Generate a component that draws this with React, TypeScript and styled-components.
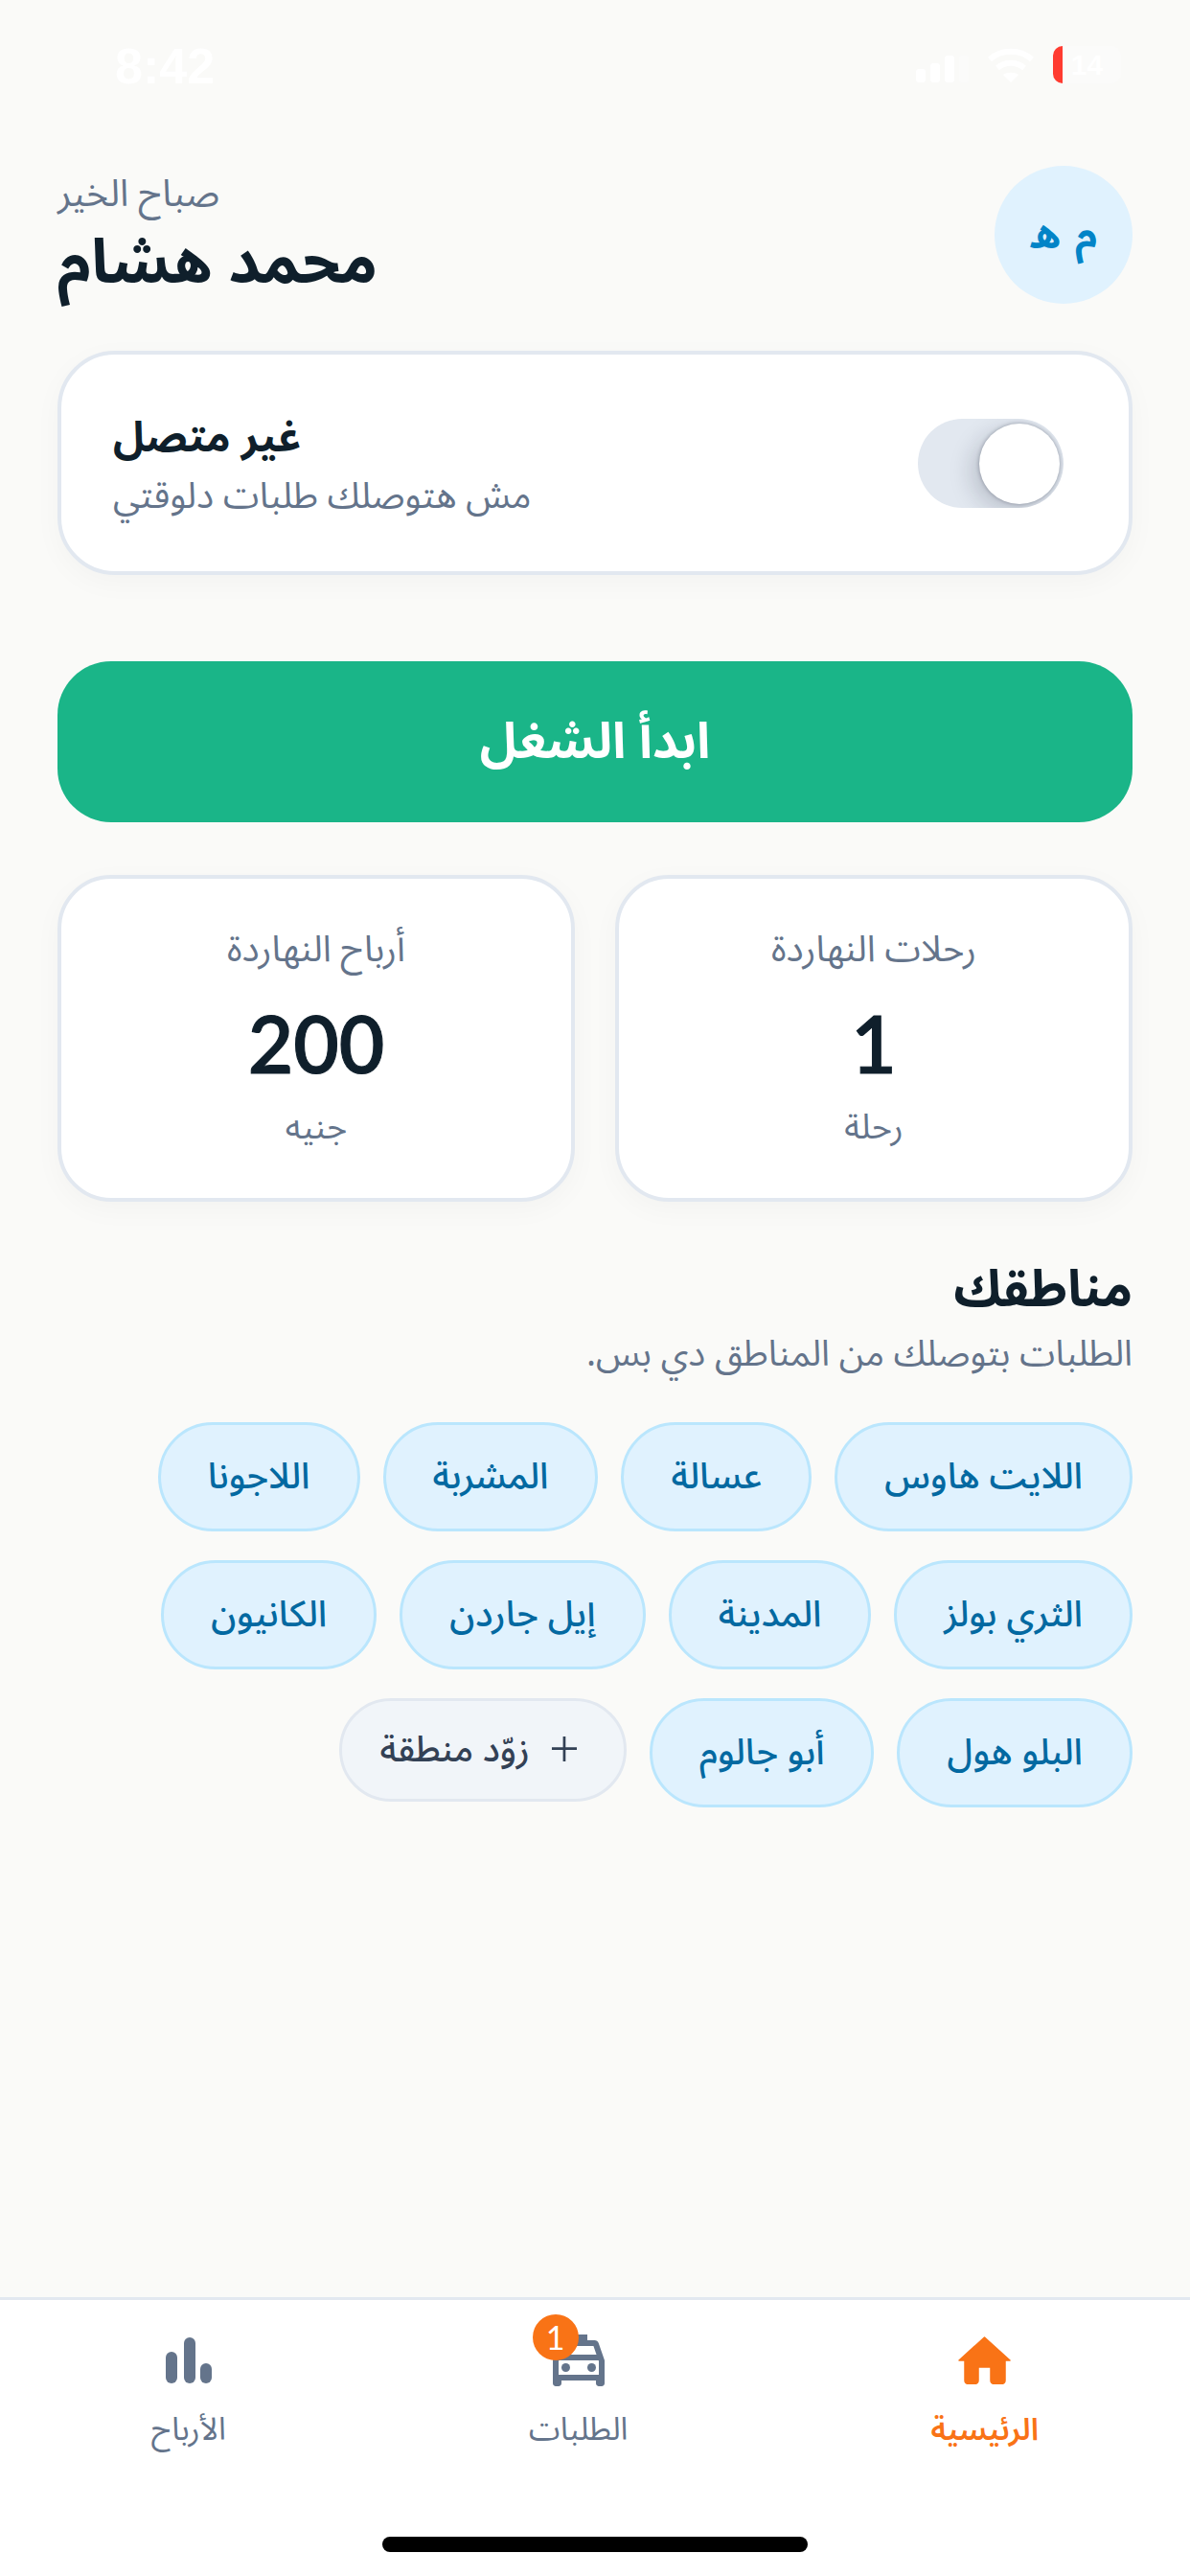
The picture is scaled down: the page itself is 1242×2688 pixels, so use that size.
import React from 'react';
import styled, { createGlobalStyle } from 'styled-components';
import { MdOutlineLocalTaxi } from 'react-icons/md';

const GlobalStyle = createGlobalStyle`
  html, body {
    margin: 0;
    padding: 0;
    background: #fafaf8;
  }
  * {
    box-sizing: border-box;
  }
  body {
    font-family: "Noto Sans Arabic", "Noto Sans", Inter, "DejaVu Sans", sans-serif;
  }
`;

const Screen = styled.div`
  width: 1242px;
  height: 2688px;
  display: flex;
  flex-direction: column;
  background: #fafaf8;
  overflow: hidden;
`;

const StatusBar = styled.div`
  height: 100px;
  flex-shrink: 0;
  padding: 44px 72px 0 120px;
  display: flex;
  justify-content: space-between;
  align-items: flex-start;
  direction: ltr;
`;

const Clock = styled.span`
  font-family: "Liberation Sans", sans-serif;
  font-size: 52px;
  line-height: 50px;
  font-weight: 700;
  color: #ffffff;
`;

const StatusIcons = styled.div`
  margin-top: 4px;
  display: flex;
  align-items: center;
  gap: 20px;
`;

const Battery = styled.div`
  position: relative;
  width: 71px;
  height: 39px;
  border-radius: 10px;
  background: #fbfbfa;
  overflow: hidden;
  text-align: center;
  font: 700 30px/39px "Liberation Sans", sans-serif;
  color: #ffffff;
`;

const BatteryLevel = styled.div`
  position: absolute;
  left: 0;
  top: 0;
  bottom: 0;
  width: 10px;
  background: #ff3b30;
`;

const Main = styled.main`
  flex: 1;
  padding: 73px 60px 0;
  display: flex;
  flex-direction: column;
`;

const Header = styled.header`
  height: 144px;
  display: flex;
  justify-content: space-between;
  align-items: center;
`;

const Avatar = styled.div`
  width: 144px;
  height: 144px;
  border-radius: 50%;
  background: #e0f2fe;
  color: #0284c7;
  display: flex;
  align-items: center;
  justify-content: center;
  font-size: 42px;
  font-weight: 700;
  word-spacing: 4px;
`;

const Greeting = styled.div`
  display: flex;
  flex-direction: column;
  gap: 6px;
  text-align: left;
`;

const Hello = styled.div`
  font-size: 39px;
  line-height: 54px;
  color: #64748b;
`;

const Name = styled.h1`
  margin: 0;
  font-size: 64px;
  line-height: 78px;
  font-weight: 700;
  color: #0f1f2b;
`;

const Card = styled.section`
  background: #ffffff;
  border: 4px solid #e2e8f0;
  box-shadow: 0 8px 30px rgba(15, 23, 42, 0.03);
`;

const StatusCard = styled(Card)`
  margin-top: 49px;
  height: 234px;
  border-radius: 60px;
  padding: 0 68px 0 54px;
  display: flex;
  align-items: center;
  justify-content: space-between;
`;

const StatusText = styled.div`
  padding-top: 6px;
  text-align: left;
`;

const StatusTitle = styled.div`
  font-size: 44px;
  line-height: 64px;
  font-weight: 700;
  color: #0f1f2b;
`;

const StatusHint = styled.div`
  font-size: 38px;
  line-height: 58px;
  color: #64748b;
`;

const Toggle = styled.div`
  direction: ltr;
  width: 152px;
  height: 93px;
  border-radius: 47px;
  background: #e2e8f0;
  position: relative;
  overflow: hidden;
`;

const ToggleKnob = styled.div`
  position: absolute;
  right: 4px;
  top: 5px;
  width: 84px;
  height: 84px;
  border-radius: 50%;
  background: #ffffff;
  box-shadow: -8px 8px 24px rgba(15, 23, 42, 0.18), 0 0 4px rgba(15, 23, 42, 0.35);
`;

const StartButton = styled.button`
  margin-top: 90px;
  height: 168px;
  border: none;
  border-radius: 56px;
  background: #1ab588;
  color: #ffffff;
  font-family: inherit;
  font-size: 52px;
  font-weight: 700;
`;

const Stats = styled.div`
  margin-top: 55px;
  display: grid;
  grid-template-columns: 1fr 1fr;
  gap: 42px;
`;

const StatCard = styled(Card)`
  height: 341px;
  border-radius: 56px;
  display: flex;
  flex-direction: column;
  align-items: center;
  padding-top: 48px;
`;

const StatLabel = styled.div`
  font-size: 38px;
  line-height: 52px;
  color: #64748b;
`;

const StatValue = styled.div`
  margin-top: 23px;
  font-family: Lato, "Liberation Sans", sans-serif;
  font-size: 82px;
  line-height: 96px;
  font-weight: 600;
  color: #0f1f2b;
  -webkit-text-stroke: 1px #0f1f2b;
`;

const StatUnit = styled.div`
  margin-top: 16px;
  font-size: 36px;
  line-height: 50px;
  color: #64748b;
`;

const SectionTitle = styled.h2`
  margin: 57px 0 0;
  font-size: 53px;
  line-height: 70px;
  font-weight: 700;
  color: #0f1f2b;
`;

const SectionHint = styled.p`
  margin: 4px 0 0;
  font-size: 37.6px;
  line-height: 56px;
  color: #64748b;
`;

const Chips = styled.div`
  margin-top: 43px;
  display: flex;
  flex-wrap: wrap;
  align-items: flex-start;
  gap: 30px 24px;
`;

const Chip = styled.div`
  height: 114px;
  padding: 0 49px;
  border-radius: 57px;
  background: #e0f2fe;
  border: 3px solid #bae6fd;
  color: #0369a1;
  font-size: 38px;
  font-weight: 500;
  display: flex;
  align-items: center;
`;

const AddChip = styled.button`
  height: 108px;
  padding: 0 46px 0 40px;
  border-radius: 54px;
  background: #f1f5f9;
  border: 3px solid #e2e8f0;
  color: #334155;
  font-family: inherit;
  font-size: 37px;
  font-weight: 500;
  display: flex;
  align-items: center;
  gap: 20px;
`;

const PlusSign = styled.span`
  font-size: 56px;
  line-height: 52px;
  font-weight: 300;
`;

const TabBar = styled.nav`
  position: relative;
  height: 291px;
  flex-shrink: 0;
  background: #ffffff;
  border-top: 3px solid #e2e8f0;
  padding-top: 27px;
  display: flex;
  justify-content: space-around;
  align-items: flex-start;
`;

const Tab = styled.div<{ $active?: boolean }>`
  position: relative;
  display: flex;
  flex-direction: column;
  align-items: center;
  gap: 12px;
  color: ${(p) => (p.$active ? '#f97316' : '#64748b')};
`;

const TabIcon = styled.div`
  position: relative;
  height: 72px;
  display: flex;
  align-items: center;
  justify-content: center;
`;

const TabLabel = styled.span<{ $active?: boolean }>`
  font-size: ${(p) => (p.$active ? 32 : 33)}px;
  line-height: 50px;
  font-weight: ${(p) => (p.$active ? 600 : 400)};
`;

const Badge = styled.span`
  position: absolute;
  top: -12px;
  left: -12px;
  width: 48px;
  height: 48px;
  border-radius: 50%;
  background: #f97316;
  color: #ffffff;
  font: 400 34px/48px Lato, sans-serif;
  text-align: center;
`;

const HomeIndicator = styled.div`
  position: absolute;
  bottom: 25px;
  left: 399px;
  width: 444px;
  height: 16px;
  border-radius: 8px;
  background: #000000;
`;

const regions = [
  'اللايت هاوس',
  'عسالة',
  'المشربة',
  'اللاجونا',
  'الثري بولز',
  'المدينة',
  'إيل جاردن',
  'الكانيون',
  'البلو هول',
  'أبو جالوم',
];

function SignalIcon() {
  return (
    <svg width="55" height="36" viewBox="0 0 55 36" fill="#ffffff">
      <rect x="0" y="22" width="10" height="14" rx="3" />
      <rect x="15" y="16" width="10" height="20" rx="3" />
      <rect x="30" y="8" width="10" height="28" rx="3" />
      <rect x="45" y="8" width="10" height="28" rx="3" fill="#fbfbfa" />
    </svg>
  );
}

function WifiIcon() {
  return (
    <svg width="48" height="36" viewBox="0 0 48 36" fill="none" stroke="#ffffff" strokeWidth="6">
      <path d="M2 12 C14 1 34 1 46 12" />
      <path d="M10 21 C18 14 30 14 38 21" />
      <path d="M24 36 L16 28 C20 25 28 25 32 28 Z" fill="#ffffff" stroke="none" />
    </svg>
  );
}

function HomeIcon() {
  return (
    <svg width="55" height="50" viewBox="0 0 55 50" fill="currentColor" stroke="currentColor" strokeWidth="1.5" strokeLinejoin="round">
      <path d="M27.5 1 L54 25 H49 V46 a3.5 3.5 0 0 1 -3.5 3.5 H37.5 a3.5 3.5 0 0 1 -3.5 -3.5 V32 H21 V46 a3.5 3.5 0 0 1 -3.5 3.5 H10.5 a3.5 3.5 0 0 1 -3.5 -3.5 V25 H1 Z" />
    </svg>
  );
}

function BarsIcon() {
  return (
    <svg width="48" height="48" viewBox="0 0 48 48" fill="currentColor">
      <rect x="0" y="15" width="12" height="33" rx="6" />
      <rect x="19" y="0" width="12" height="48" rx="6" />
      <rect x="36" y="27" width="12" height="21" rx="6" />
    </svg>
  );
}

export default function App() {
  return (
    <>
      <GlobalStyle />
      <Screen dir="rtl">
        <StatusBar>
          <Clock>8:42</Clock>
          <StatusIcons>
            <SignalIcon />
            <WifiIcon />
            <Battery>
              <BatteryLevel />
              14
            </Battery>
          </StatusIcons>
        </StatusBar>
        <Main>
          <Header>
            <Avatar>م ه</Avatar>
            <Greeting>
              <Hello>صباح الخير</Hello>
              <Name>محمد هشام</Name>
            </Greeting>
          </Header>

          <StatusCard>
            <Toggle>
              <ToggleKnob />
            </Toggle>
            <StatusText>
              <StatusTitle>غير متصل</StatusTitle>
              <StatusHint>مش هتوصلك طلبات دلوقتي</StatusHint>
            </StatusText>
          </StatusCard>

          <StartButton>ابدأ الشغل</StartButton>

          <Stats>
            <StatCard>
              <StatLabel>رحلات النهاردة</StatLabel>
              <StatValue>1</StatValue>
              <StatUnit>رحلة</StatUnit>
            </StatCard>
            <StatCard>
              <StatLabel>أرباح النهاردة</StatLabel>
              <StatValue>200</StatValue>
              <StatUnit>جنيه</StatUnit>
            </StatCard>
          </Stats>

          <SectionTitle>مناطقك</SectionTitle>
          <SectionHint>الطلبات بتوصلك من المناطق دي بس.</SectionHint>
          <Chips>
            {regions.map((r) => (
              <Chip key={r}>{r}</Chip>
            ))}
            <AddChip>
              <PlusSign>+</PlusSign>
              زوّد منطقة
            </AddChip>
          </Chips>
        </Main>
        <TabBar>
          <Tab $active>
            <TabIcon>
              <HomeIcon />
            </TabIcon>
            <TabLabel $active>الرئيسية</TabLabel>
          </Tab>
          <Tab>
            <TabIcon>
              <MdOutlineLocalTaxi size={72} />
              <Badge>1</Badge>
            </TabIcon>
            <TabLabel>الطلبات</TabLabel>
          </Tab>
          <Tab>
            <TabIcon>
              <BarsIcon />
            </TabIcon>
            <TabLabel>الأرباح</TabLabel>
          </Tab>
          <HomeIndicator />
        </TabBar>
      </Screen>
    </>
  );
}
